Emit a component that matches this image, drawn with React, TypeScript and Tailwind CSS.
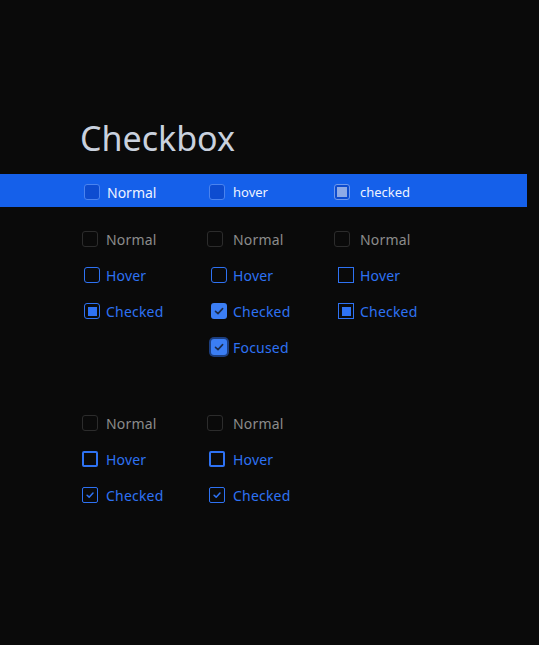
import React, { FC } from "react";

const BLUE = "#2e72f3";

const Check: FC<{ color: string; size?: number; w?: number }> = ({ color, size = 12, w = 1.6 }) => (
  <svg width={size} height={size} viewBox="0 0 12 12" fill="none">
    <path d="M2.5 6.3 L5 8.6 L9.6 3.6" stroke={color} strokeWidth={w} strokeLinecap="round" strokeLinejoin="round" />
  </svg>
);

type Kind =
  | "barNormal"
  | "barChecked"
  | "normal"
  | "hover"
  | "dot"
  | "fill"
  | "focused"
  | "sqHover"
  | "sqDot"
  | "hover2"
  | "check2";

const Box: FC<{ kind: Kind }> = ({ kind }) => {
  switch (kind) {
    case "barNormal":
      return <div className="w-4 h-4 rounded-[3px] bg-[#0d4cd0] border border-[#4a83ef]" />;
    case "barChecked":
      return (
        <div className="w-4 h-4 rounded-[3px] bg-[#0d4cd0] border border-[#6f98ec] flex items-center justify-center">
          <div className="w-[10px] h-[10px] bg-[#8eaae6]" />
        </div>
      );
    case "normal":
      return <div className="w-4 h-4 rounded-[3px] border border-[#2c2c2c]" />;
    case "hover":
      return <div className="w-4 h-4 rounded-[3px] border-[1.5px] border-[#2e72f3]" />;
    case "dot":
      return (
        <div className="w-4 h-4 rounded-[3px] border-[1.5px] border-[#2e72f3] flex items-center justify-center">
          <div className="w-[9px] h-[9px] bg-[#2e72f3]" />
        </div>
      );
    case "fill":
      return (
        <div className="w-4 h-4 rounded-[3px] bg-[#3b7ef4] flex items-center justify-center">
          <Check color="#1b2b4a" />
        </div>
      );
    case "focused":
      return (
        <div className="w-4 h-4 rounded-[3px] bg-[#3b7ef4] flex items-center justify-center ring-2 ring-[#2e72f3]/50">
          <Check color="#1b2b4a" />
        </div>
      );
    case "sqHover":
      return <div className="w-4 h-4 border-[1.5px] border-[#2e72f3]" />;
    case "sqDot":
      return (
        <div className="w-4 h-4 border-[1.5px] border-[#2e72f3] flex items-center justify-center">
          <div className="w-[9px] h-[9px] bg-[#2e72f3]" />
        </div>
      );
    case "hover2":
      return <div className="w-4 h-4 rounded-[2px] border-2 border-[#2e72f3]" />;
    case "check2":
      return (
        <div className="w-4 h-4 rounded-[2px] border-[1.5px] border-[#2e72f3] flex items-center justify-center">
          <Check color={BLUE} size={10} w={1.8} />
        </div>
      );
  }
};

// label sits at a fixed x; box is pushed right against it with a gap
const Item: FC<{ kind: Kind; gap: number; label: string; tone: string }> = ({ kind, gap, label, tone }) => (
  <div className="flex items-center h-9">
    <div className="w-[26px] flex justify-end" style={{ paddingRight: gap }}>
      <Box kind={kind} />
    </div>
    <span className={`text-[14px] tracking-[0.2px] ${tone}`}>{label}</span>
  </div>
);

const gray = "text-[#8c8c8c]";
const blue = "text-[#2e72f3]";

const App: FC = () => {
  return (
    <div className="w-[539px] h-[645px] bg-[#0a0a0a] overflow-hidden" style={{ fontFamily: '"Noto Sans", "Open Sans", sans-serif' }}>
      <h1 className="pl-20 pt-[114px] text-[34px] leading-[48px] text-[#c9d1de] font-normal">Checkbox</h1>

      <div className="mt-[12px] w-[527px] h-[33px] bg-[#1560ea] grid grid-cols-[127px_127px_127px] pl-20 pt-[1px] text-white">
        <div className="flex items-center h-[36px] -mt-[1px]">
          <div className="w-[26px] flex justify-end pr-[6px]"><Box kind="barNormal" /></div>
          <span className="text-[14px] ml-[1px] text-[#eef3ff]">Normal</span>
        </div>
        <div className="flex items-center h-[36px] -mt-[1px]">
          <div className="w-[26px] flex justify-end pr-[8px]"><Box kind="barNormal" /></div>
          <span className="text-[13px] mt-[1px] text-[#eef3ff]">hover</span>
        </div>
        <div className="flex items-center h-[36px] -mt-[1px]">
          <div className="w-[26px] flex justify-end pr-[10px]"><Box kind="barChecked" /></div>
          <span className="text-[13px] mt-[1px] text-[#eef3ff]">checked</span>
        </div>
      </div>

      <div className="mt-[14px] pl-20 grid grid-cols-[127px_127px_127px]">
        <div className="flex flex-col">
          <Item kind="normal" gap={8} label="Normal" tone={gray} />
          <Item kind="hover" gap={6} label="Hover" tone={blue} />
          <Item kind="dot" gap={6} label="Checked" tone={blue} />
        </div>
        <div className="flex flex-col">
          <Item kind="normal" gap={10} label="Normal" tone={gray} />
          <Item kind="hover" gap={6} label="Hover" tone={blue} />
          <Item kind="fill" gap={6} label="Checked" tone={blue} />
          <Item kind="focused" gap={6} label="Focused" tone={blue} />
        </div>
        <div className="flex flex-col">
          <Item kind="normal" gap={10} label="Normal" tone={gray} />
          <Item kind="sqHover" gap={6} label="Hover" tone={blue} />
          <Item kind="sqDot" gap={6} label="Checked" tone={blue} />
        </div>
      </div>

      <div className="mt-[40px] pl-20 grid grid-cols-[127px_127px]">
        <div className="flex flex-col">
          <Item kind="normal" gap={8} label="Normal" tone={gray} />
          <Item kind="hover2" gap={8} label="Hover" tone={blue} />
          <Item kind="check2" gap={8} label="Checked" tone={blue} />
        </div>
        <div className="flex flex-col">
          <Item kind="normal" gap={10} label="Normal" tone={gray} />
          <Item kind="hover2" gap={8} label="Hover" tone={blue} />
          <Item kind="check2" gap={8} label="Checked" tone={blue} />
        </div>
      </div>
    </div>
  );
};

export default App;
